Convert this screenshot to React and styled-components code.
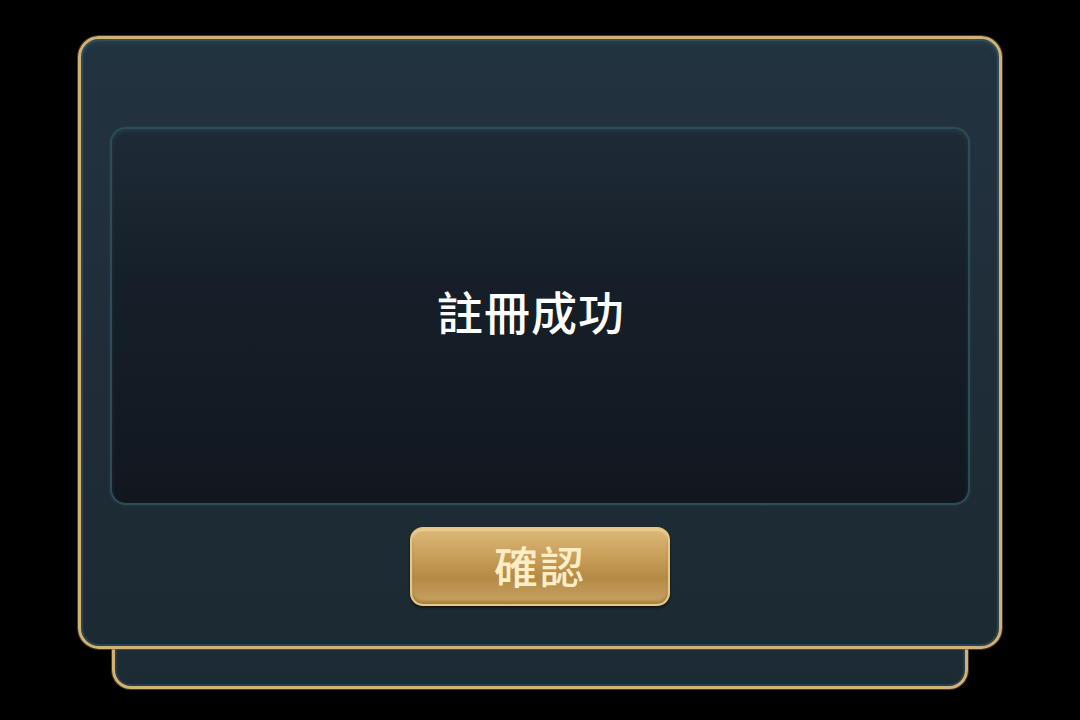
import React from 'react'
import styled, { createGlobalStyle } from 'styled-components'

const GlobalStyle = createGlobalStyle`
  html, body {
    margin: 0;
    padding: 0;
    background: #000;
  }
  body {
    font-family: "Noto Sans CJK TC", "Noto Sans", sans-serif;
  }
  * {
    box-sizing: border-box;
  }
`

const Page = styled.div`
  width: 1080px;
  height: 720px;
  display: flex;
  flex-direction: column;
  align-items: center;
  padding-top: 36px;
  background: #000;
  overflow: hidden;
`

const Dialog = styled.div`
  position: relative;
  z-index: 2;
  width: 924px;
  height: 613px;
  display: flex;
  flex-direction: column;
  align-items: center;
  gap: 22px;
  padding: 88px 29px 40px;
  border: 3px solid #d2b274;
  border-radius: 21px;
  background: linear-gradient(180deg, #223340 0%, #1f2d38 50%, #1c2a32 100%);
  box-shadow:
    0 0 0 1px rgba(120, 95, 50, 0.6),
    inset 0 0 0 2px rgba(70, 110, 125, 0.35),
    inset 0 3px 6px rgba(90, 140, 160, 0.18);
`

const BackTab = styled.div`
  position: relative;
  z-index: 1;
  width: 856px;
  height: 61px;
  margin-top: -21px;
  border: 3px solid #d2b274;
  border-radius: 19px;
  background: linear-gradient(180deg, #1e2d37 0%, #1b2a33 100%);
  box-shadow:
    0 0 0 1px rgba(120, 95, 50, 0.6),
    inset 0 0 0 2px rgba(70, 110, 125, 0.3);
`

const MessagePanel = styled.div`
  width: 100%;
  height: 381px;
  display: flex;
  align-items: center;
  justify-content: center;
  padding-right: 18px;
  padding-bottom: 12px;
  border: 2px solid #2c4d58;
  border-radius: 16px;
  background: linear-gradient(180deg, #1e2b36 0%, #161f29 40%, #12171f 100%);
  box-shadow:
    inset 0 2px 4px rgba(60, 110, 125, 0.25),
    0 0 3px rgba(50, 90, 105, 0.5);
`

const Message = styled.div`
  color: #ffffff;
  font-size: 46px;
  font-weight: 500;
  letter-spacing: 1px;
`

const ConfirmButton = styled.button`
  width: 260px;
  height: 80px;
  display: flex;
  align-items: center;
  justify-content: center;
  padding-bottom: 4px;
  border: 2px solid #e6c888;
  border-radius: 13px;
  background: linear-gradient(180deg, #dcb978 0%, #c69c57 40%, #b48a45 65%, #c9a362 100%);
  box-shadow:
    inset 0 2px 2px rgba(255, 235, 180, 0.45),
    inset 0 -3px 3px rgba(120, 80, 30, 0.4),
    0 2px 3px rgba(0, 0, 0, 0.5);
  color: #fbeec6;
  font-family: "Noto Sans CJK TC", "Noto Sans", sans-serif;
  font-size: 44px;
  font-weight: 500;
  letter-spacing: 2px;
  cursor: pointer;
`

const App = () => {
  return (
    <>
      <GlobalStyle />
      <Page>
        <Dialog>
          <MessagePanel>
            <Message>註冊成功</Message>
          </MessagePanel>
          <ConfirmButton>確認</ConfirmButton>
        </Dialog>
        <BackTab />
      </Page>
    </>
  )
}

export default App
